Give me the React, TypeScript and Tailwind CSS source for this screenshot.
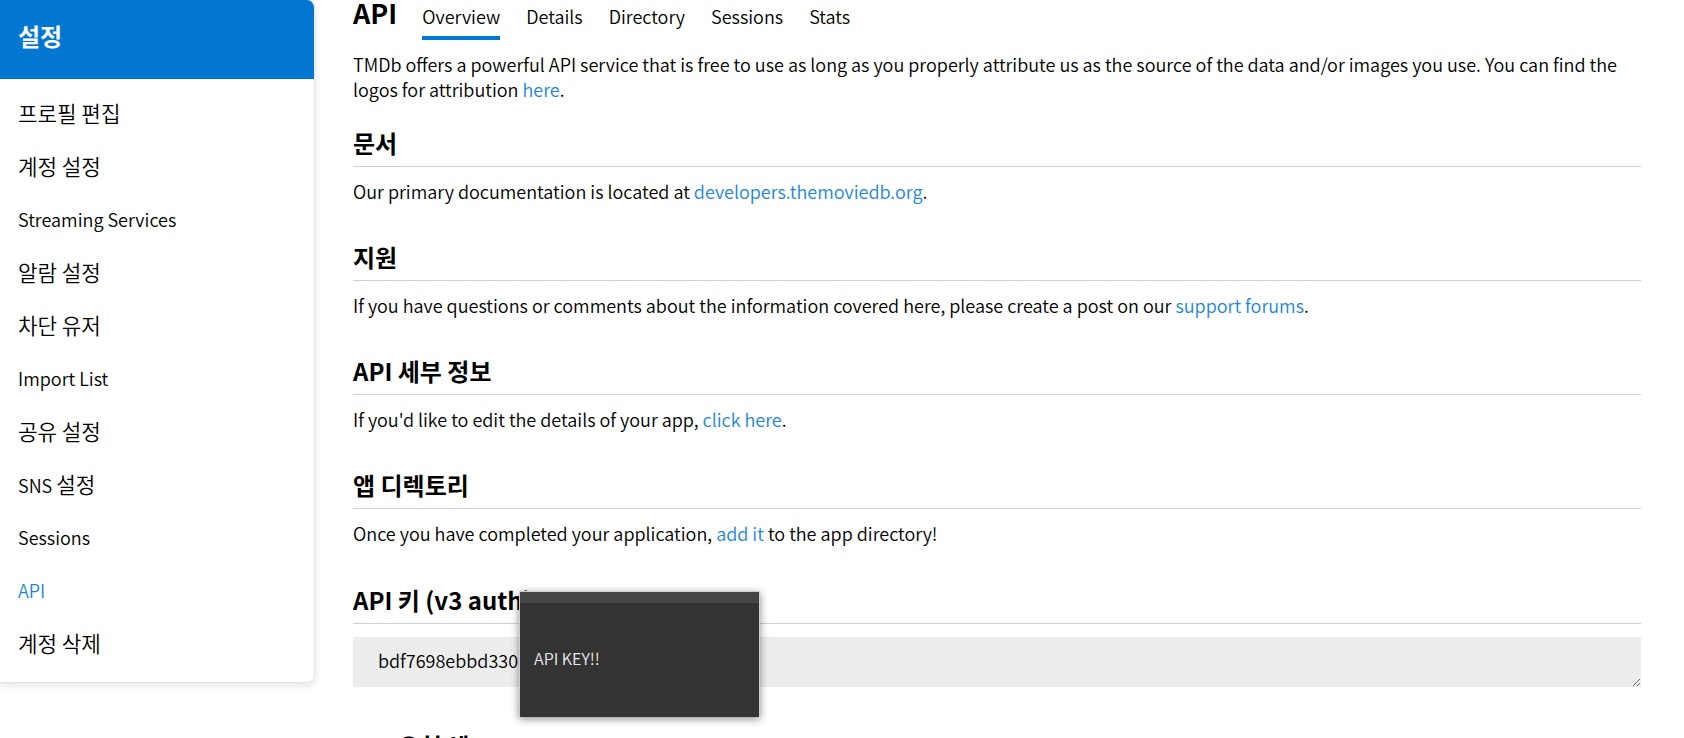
import React from "react";

const menu = [
  "프로필 편집",
  "계정 설정",
  "Streaming Services",
  "알람 설정",
  "차단 유저",
  "Import List",
  "공유 설정",
  "SNS 설정",
  "Sessions",
  "API",
  "계정 삭제",
];

const tabs = ["Overview", "Details", "Directory", "Sessions", "Stats"];

// Korean runs get a slightly larger size, as in the reference's fallback font.
function Mixed({ text }: { text: string }) {
  const parts = text.split(/([\uAC00-\uD7A3]+(?: [\uAC00-\uD7A3]+)*)/);
  return (
    <>
      {parts.map((p, i) =>
        i % 2 === 1 ? (
          <span key={i} className="text-[1.18em]">
            {p}
          </span>
        ) : (
          <React.Fragment key={i}>{p}</React.Fragment>
        )
      )}
    </>
  );
}

function Heading({ children, first }: { children: React.ReactNode; first?: boolean }) {
  return (
    <h2
      className={`${first ? "mt-[25.5px]" : "mt-[38.25px]"} text-[24px] font-bold leading-[30px] pb-[8px] border-b border-[#d0d0d0] text-black`}
    >
      {children}
    </h2>
  );
}

function Para({ children }: { children: React.ReactNode }) {
  return <p className="mt-[12px] text-[18px] font-[350] leading-[25px] text-black">{children}</p>;
}

function Link({ children }: { children: React.ReactNode }) {
  return <a className="text-[#1a86e0] cursor-pointer">{children}</a>;
}

export default function App() {
  return (
    <div className="relative w-[1684px] h-[738px] overflow-hidden bg-white font-['Noto_Sans_CJK_KR',sans-serif]">
      <div className="flex items-start">
        {/* Sidebar */}
        <aside className="w-[315px] shrink-0 bg-white rounded-r-lg overflow-hidden border border-l-0 border-t-0 border-[#e4e4e4] shadow-[0_2px_8px_rgba(0,0,0,0.12)]">
          <div className="h-[79px] bg-[#0177d2] pl-[18px] pt-[21px]">
            <h1 className="text-white text-[24px] font-bold leading-[30px]">설정</h1>
          </div>
          <ul className="pt-[8px] pb-[12px]">
            {menu.map((m) => (
              <li
                key={m}
                className={`h-[53px] flex items-center pl-[18px] text-[18px] font-[350] leading-[25px] ${
                  m === "API" ? "text-[#1a86e0]" : "text-black"
                }`}
              >
                <span>
                  <Mixed text={m} />
                </span>
              </li>
            ))}
          </ul>
        </aside>

        {/* Main */}
        <main className="ml-[38px] w-[1288px]">
          <div className="h-[40px] flex items-baseline">
            <span className="text-[27px] font-bold leading-[25px] text-black">API</span>
            <nav className="flex items-baseline ml-[25px] gap-[26px]">
              {tabs.map((t) => (
                <span
                  key={t}
                  className={`text-[18px] font-[350] leading-[26px] pb-[7px] text-black ${
                    t === "Overview" ? "border-b-4 border-[#0177d2]" : "border-b-4 border-transparent"
                  }`}
                >
                  {t}
                </span>
              ))}
            </nav>
          </div>

          <p className="mt-[12px] text-[18px] font-[350] leading-[25px] text-black">
            TMDb offers a powerful API service that is free to use as long as you properly attribute us as the
            source of the data and/or images you use. You can find the logos for attribution <Link>here</Link>.
          </p>

          <Heading first>문서</Heading>
          <Para>
            Our primary documentation is located at <Link>developers.themoviedb.org</Link>.
          </Para>

          <Heading>지원</Heading>
          <Para>
            If you have questions or comments about the information covered here, please create a post on our{" "}
            <Link>support forums</Link>.
          </Para>

          <Heading>API 세부 정보</Heading>
          <Para>
            If you'd like to edit the details of your app, <Link>click here</Link>.
          </Para>

          <Heading>앱 디렉토리</Heading>
          <Para>
            Once you have completed your application, <Link>add it</Link> to the app directory!
          </Para>

          <Heading>API 키 (v3 auth)</Heading>
          <textarea
            readOnly
            value="bdf7698ebbd330"
            className="mt-[13px] block w-full h-[50px] bg-[#ededed] px-[25px] py-[11px] text-[18px] font-[350] leading-[25px] text-black resize-y outline-none border-0 font-['Noto_Sans_CJK_KR',sans-serif]"
          />

          <h2 className="mt-[44px] text-[24px] font-bold leading-[30px] text-black">API 요청 예</h2>
        </main>
      </div>

      {/* Tooltip overlay */}
      <div className="absolute left-[519px] top-[591px] w-[241px] h-[126px] bg-[#333333] border border-[#cfcfcf] border-b-0 shadow-[0_2px_8px_rgba(0,0,0,0.45)] flex flex-col">
        <div className="h-[11px] bg-[#454545]" />
        <div className="flex-1 flex items-center pl-[14px] pb-[4px]">
          <span className="text-[16px] font-[350] leading-[22px] text-[#ececec]">API KEY!!</span>
        </div>
      </div>
    </div>
  );
}
